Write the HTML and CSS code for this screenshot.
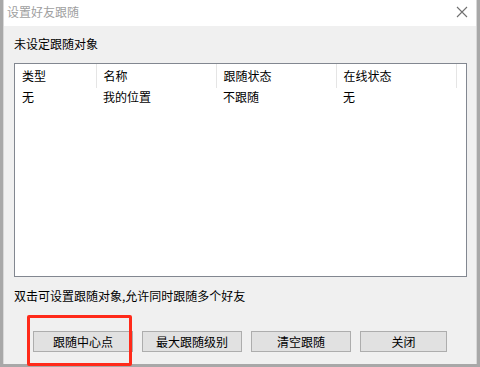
FILE: index.html
```html
<!DOCTYPE html>
<html lang="zh-CN">
<head>
    <meta charset="UTF-8">
    <title>设置好友跟随</title>
    <link rel="stylesheet" href="styles.css">
</head>
<body>
    <div class="dialog">
        <div class="titlebar">
            <span class="title">设置好友跟随</span>
            <svg class="close" width="12" height="12" viewBox="0 0 12 12">
                <path d="M1 1L11 11M11 1L1 11" stroke="#707070" stroke-width="1.1" fill="none"/>
            </svg>
        </div>
        <div class="content">
            <p class="status">未设定跟随对象</p>
            <div class="listbox">
                <table class="list">
                    <thead>
                        <tr>
                            <th class="c1">类型</th>
                            <th class="c2">名称</th>
                            <th class="c3">跟随状态</th>
                            <th class="c4">在线状态</th>
                            <th class="c5"></th>
                        </tr>
                    </thead>
                    <tbody>
                        <tr>
                            <td>无</td>
                            <td>我的位置</td>
                            <td>不跟随</td>
                            <td>无</td>
                            <td></td>
                        </tr>
                    </tbody>
                </table>
            </div>
            <p class="hint">双击可设置跟随对象,允许同时跟随多个好友</p>
            <div class="buttons">
                <button class="btn">跟随中心点</button>
                <button class="btn">最大跟随级别</button>
                <button class="btn">清空跟随</button>
                <button class="btn btn-close">关闭</button>
            </div>
        </div>
        <div class="highlight"></div>
    </div>
</body>
</html>
```

FILE: styles.css
```css
body {
    margin: 0;
    height: 367px;
    overflow: hidden;
    background: #a8a8a8;
    font-family: "Noto Sans CJK SC", "Liberation Sans", sans-serif;
    font-size: 12px;
    color: #000;
}

.dialog {
    position: relative;
    margin-left: 3px;
    width: 472px;
    height: 364px;
    background: #f0f0f0;
    border-left: 1px solid #d8d8d8;
    border-right: 1px solid #d8d8d8;
}

.titlebar {
    height: 26px;
    background: #fff;
    display: flex;
    align-items: center;
    justify-content: space-between;
    padding: 0 8px 0 3px;
}

.title {
    color: #a0a0a0;
    line-height: 16px;
    margin-top: -2px;
}

.close {
    margin-top: -2px;
}

.content {
    padding: 10px 9px 0 10px;
}

.status {
    margin: 0;
    line-height: 16px;
}

.listbox {
    margin-top: 11px;
    height: 212px;
    background: #fff;
    border: 1px solid #828790;
}

.list {
    border-collapse: collapse;
    table-layout: fixed;
}

.list th {
    font-weight: normal;
    text-align: left;
    height: 24px;
    padding: 0 0 0 7px;
    line-height: 16px;
    border-right: 1px solid #e5e5e5;
    box-sizing: border-box;
}

.list td {
    padding: 1px 0 0 7px;
    height: 16px;
    line-height: 16px;
}

.c1 { width: 81px; }
.c2 { width: 120px; }
.c3 { width: 120px; }
.c4 { width: 120px; }
.c5 { width: 10px; border-right: none !important; }

.hint {
    margin: 11px 0 0;
    line-height: 16px;
}

.buttons {
    display: flex;
    gap: 9px;
    margin-top: 27px;
    padding-left: 19px;
}

.btn {
    width: 100px;
    height: 21px;
    padding: 0;
    background: #e1e1e1;
    border: 1px solid #adadad;
    font-family: inherit;
    font-size: 12px;
    line-height: 16px;
    color: #000;
}

.btn-close {
    width: 87px;
}

.highlight {
    position: absolute;
    left: 23px;
    top: 315px;
    width: 99px;
    height: 45px;
    border: 3px solid #ff2a1a;
    border-radius: 2px;
}
```
